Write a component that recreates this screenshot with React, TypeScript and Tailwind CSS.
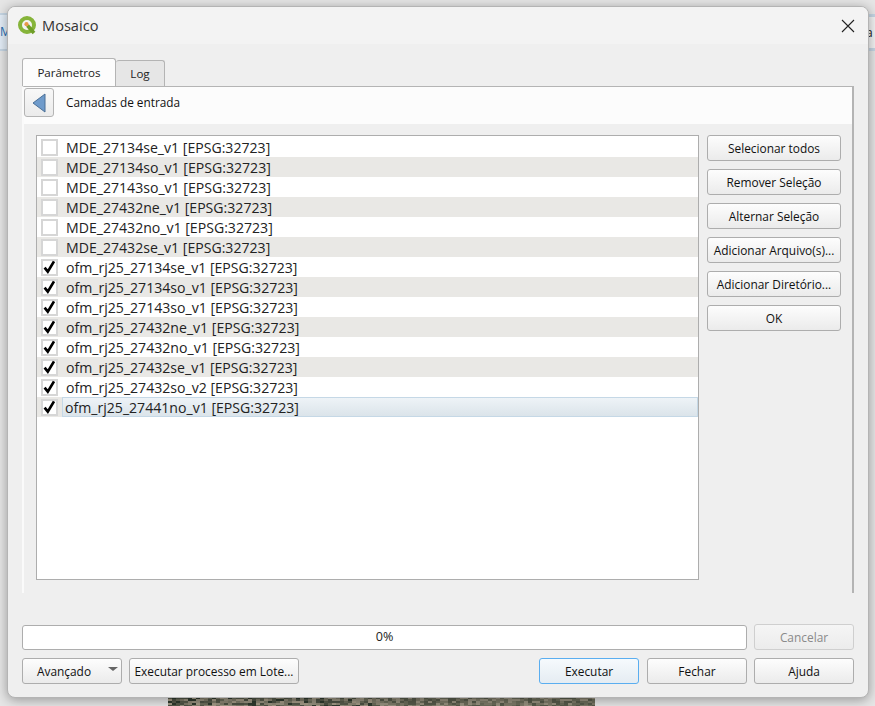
const FONT = "font-['Open_Sans','Noto_Sans',sans-serif]";

const layers = [
  ["MDE_27134se_v1", false],
  ["MDE_27134so_v1", false],
  ["MDE_27143so_v1", false],
  ["MDE_27432ne_v1", false],
  ["MDE_27432no_v1", false],
  ["MDE_27432se_v1", false],
  ["ofm_rj25_27134se_v1", true],
  ["ofm_rj25_27134so_v1", true],
  ["ofm_rj25_27143so_v1", true],
  ["ofm_rj25_27432ne_v1", true],
  ["ofm_rj25_27432no_v1", true],
  ["ofm_rj25_27432se_v1", true],
  ["ofm_rj25_27432so_v2", true],
  ["ofm_rj25_27441no_v1", true],
] as const;

const sideButtons = ["Selecionar todos", "Remover Seleção", "Alternar Seleção", "Adicionar Arquivo(s)...", "Adicionar Diretório...", "OK"];

type Kind = "normal" | "default" | "disabled";

function Btn({ children, className = "", kind = "normal" }: { children: React.ReactNode; className?: string; kind?: Kind }) {
  const look =
    kind === "default"
      ? "border-[#5aaef0] from-[#f6fafd] to-[#e5ecf2] text-[#111]"
      : kind === "disabled"
        ? "border-[#cfcfcf] from-[#f5f5f5] to-[#ececec] text-[#8a8a8a]"
        : "border-[#adadad] from-[#fdfdfd] to-[#ebebeb] text-[#111]";
  return (
    <div className={`flex items-center justify-center whitespace-nowrap rounded-[3px] border bg-gradient-to-b pt-[1px] text-[11.9px] ${look} ${className}`}>
      {children}
    </div>
  );
}

function Check({ on }: { on: boolean }) {
  return (
    <div className="flex h-[17px] w-[17px] shrink-0 items-center justify-center border-2 border-[#d6d6d6] bg-white">
      {on && (
        <svg width="13" height="14" viewBox="0 0 13 14">
          <path d="M1.6 7.6 L4.8 11.6 L11 1.4" fill="none" stroke="#000" strokeWidth="2.7" />
        </svg>
      )}
    </div>
  );
}

function Row({ name, on, index, last }: { name: string; on: boolean; index: number; last: boolean }) {
  return (
    <div className={`flex h-5 items-center pl-1 ${index % 2 ? "bg-[#e9e8e5]" : "bg-white"}`}>
      <Check on={on} />
      {last ? (
        <div className="ml-[4px] flex h-5 flex-1 items-center border border-[#c5d8e6] bg-gradient-to-b from-[#eef3f7] to-[#dbe4ea] pl-[2px] pt-[1px] text-[14.1px] text-[#222]">
          {name} [EPSG:32723]
        </div>
      ) : (
        <div className="ml-[8px] pt-[1px] text-[14.1px] text-[#222]">{name} [EPSG:32723]</div>
      )}
    </div>
  );
}

function Photo() {
  const tones = ["#4d5244", "#8c8674", "#2f3a2e", "#a39a86", "#6b6c5a", "#7d7a68", "#565a4a", "#97917f"];
  const cells: React.ReactNode[] = [];
  let seed = 7;
  for (let y = 0; y < 11; y += 2) {
    for (let x = 0; x < 427; x += 4) {
      seed = (seed * 137 + 59) % 1009;
      const base = x > 210 ? 4 + (seed % 4) : seed % 8;
      cells.push(<rect key={`${x}-${y}`} x={x} y={y} width={5 + (seed % 4)} height="2" fill={tones[base]} />);
    }
  }
  return (
    <svg className="absolute left-[168px] top-[695px]" width="427" height="11" viewBox="0 0 427 11">
      <rect width="427" height="11" fill="#6f6e5e" />
      {cells}
    </svg>
  );
}

export default function App() {
  return (
    <div className={`relative h-[706px] w-[875px] overflow-hidden bg-[#e6e6e6] ${FONT}`}>
      {/* what lies behind the dialog */}
      <div className="absolute left-0 top-[13px] h-[38px] w-[10px] border-y-2 border-[#c6d6e4] bg-[#e4eef8] text-[12px] leading-[34px] text-[#2a6db0]">M</div>
      <div className="absolute right-0 top-[14px] h-[37px] w-[10px] border-y-[3px] border-[#c6d6e4] bg-[#f3f3f3] pl-[1px] text-[12px] leading-[31px] text-[#222]">a</div>
      <Photo />

      {/* dialog */}
      <div className="absolute left-[7px] top-[6px] flex h-[692px] w-[862px] flex-col overflow-hidden rounded-lg border border-[#b4b4b4] bg-[#efefef] shadow-[0_2px_12px_rgba(0,0,0,0.35)]">
        <div className="flex h-[37px] shrink-0 items-center bg-[#f3f3f3] pl-[9px] pr-[13px]">
          <svg width="21" height="21" viewBox="0 0 21 21">
            <circle cx="10" cy="10" r="7" fill="none" stroke="#86b43a" strokeWidth="4" />
            <path d="M10.5 10.5 L17 18" stroke="#6f9e28" strokeWidth="3.6" />
            <circle cx="9.5" cy="9.2" r="2.1" fill="#e8994a" />
          </svg>
          <span className="ml-[4px] text-[14.6px] text-[#333]">Mosaico</span>
          <svg className="ml-auto" width="14" height="14" viewBox="0 0 14 14">
            <path d="M1 1 L13 13 M13 1 L1 13" stroke="#222" strokeWidth="1.1" />
          </svg>
        </div>

        <div className="flex flex-1 flex-col px-[14px] pb-[13px] pt-[14px]">
          {/* tabs */}
          <div className="relative z-10 flex h-[28px] items-end">
            <div className="flex h-[28px] w-[94px] items-center justify-center rounded-t-[3px] border border-b-0 border-[#b4b4b4] bg-[#fcfcfc] pt-[1px] text-[11.6px] text-[#222]">Parâmetros</div>
            <div className="flex h-[26px] w-[49px] items-center justify-center rounded-t-[3px] border border-b-0 border-l-0 border-[#b4b4b4] bg-[#e6e6e6] pt-[1px] text-[11.6px] text-[#222]">Log</div>
          </div>

          {/* pane */}
          <div className="flex h-[507px] flex-col border-l-2 border-r-2 border-t border-[#b4b4b4] border-l-[#fafafa]">
            <div className="flex h-[37px] shrink-0 items-start bg-[#fcfcfc] pt-[1px]">
              <div className="flex h-[29px] w-[30px] items-center justify-center rounded-[3px] border border-[#b4b4b4] bg-gradient-to-b from-[#f8f8f8] to-[#ebebeb]">
                <svg width="14" height="20" viewBox="0 0 14 20">
                  <path d="M13 1 L13 19 L1 10 Z" fill="#6f9bcb" stroke="#4a6f96" strokeWidth="1" />
                </svg>
              </div>
              <span className="ml-[12px] mt-[6px] text-[11.8px] text-[#111]">Camadas de entrada</span>
            </div>
            <div className="flex flex-1 gap-2 pb-3 pl-3 pr-[11px] pt-[11px]">
              <div className="h-[445px] flex-1 border border-[#adadad] bg-white pt-[1px]">
                {layers.map(([n, on], i) => (
                  <Row key={n} name={n} on={on} index={i} last={i === layers.length - 1} />
                ))}
              </div>
              <div className="flex w-[134px] shrink-0 flex-col gap-[8px]">
                {sideButtons.map((b) => (
                  <Btn key={b} className="h-[26px]">{b}</Btn>
                ))}
              </div>
            </div>
          </div>

          {/* progress */}
          <div className="mt-auto flex h-[26px] items-center gap-[7px]">
            <div className="flex h-[25px] flex-1 items-center justify-center rounded-[3px] border border-[#adadad] bg-white text-[12.6px] text-[#222]">0%</div>
            <Btn className="h-[26px] w-[100px]" kind="disabled">Cancelar</Btn>
          </div>

          {/* bottom buttons */}
          <div className="mt-[8px] flex h-[26px] items-center">
            <Btn className="relative h-[26px] w-[100px] pr-[16px]">
              Avançado
              <span className="absolute right-[3px] top-[8px] h-0 w-0 border-x-[5px] border-t-[4px] border-x-transparent border-t-[#666]" />
            </Btn>
            <Btn className="ml-[7px] h-[26px] w-[170px]">Executar processo em Lote...</Btn>
            <Btn className="ml-auto h-[26px] w-[100px]" kind="default">Executar</Btn>
            <Btn className="ml-[8px] h-[26px] w-[100px]">Fechar</Btn>
            <Btn className="ml-[7px] h-[26px] w-[100px]">Ajuda</Btn>
          </div>
        </div>
      </div>
    </div>
  );
}
